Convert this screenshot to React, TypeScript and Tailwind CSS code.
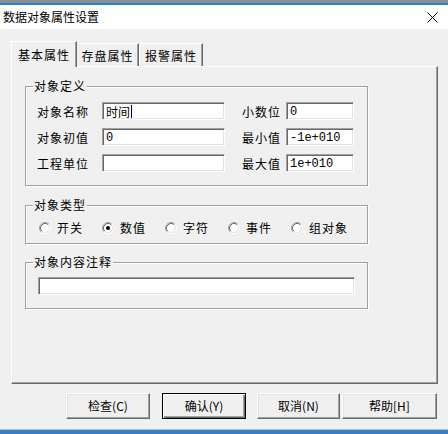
import React from 'react';

const sunken =
  'border border-t-[#a0a0a0] border-l-[#a0a0a0] border-b-white border-r-white shadow-[inset_1px_1px_0_#696969,inset_-1px_-1px_0_#e3e3e3] bg-white';

const Field = ({ value, width, caret = false, mono = false }: { value?: string; width: string; caret?: boolean; mono?: boolean }) => (
  <div className={`${sunken} ${width} h-[18px] flex items-center pl-[3px] pt-[1px]`}>
    <span
      className={
        mono
          ? "font-['Liberation_Mono',monospace] text-[12px] leading-[14px] text-black"
          : 'text-[12px] leading-[14px] text-black'
      }
    >
      {value}
    </span>
    {caret && <span className="w-[1px] h-[13px] bg-black ml-[1px]" />}
  </div>
);

const Group = ({ label, className, children }: { label: string; className: string; children?: React.ReactNode }) => (
  <div
    className={`relative w-[343px] border border-[#a0a0a0] shadow-[inset_1px_1px_0_#fff,1px_1px_0_#fff] ${className}`}
  >
    <span className="absolute left-[7px] top-[-9px] px-[1px] bg-[#f0f0f0] text-[12px] tracking-[1px] leading-[16px] text-black">
      {label}
    </span>
    {children}
  </div>
);

const Radio = ({ checked = false }: { checked?: boolean }) => (
  <svg width="12" height="12" viewBox="0 0 12 12" className="shrink-0">
    <circle cx="6" cy="6" r="4.5" fill="#fff" />
    <path d="M2.11 9.89 A5.5 5.5 0 0 1 9.89 2.11" fill="none" stroke="#a0a0a0" />
    <path d="M9.89 2.11 A5.5 5.5 0 0 1 2.11 9.89" fill="none" stroke="#fff" />
    <path d="M2.82 9.18 A4.5 4.5 0 0 1 9.18 2.82" fill="none" stroke="#696969" />
    <path d="M9.18 2.82 A4.5 4.5 0 0 1 2.82 9.18" fill="none" stroke="#e3e3e3" />
    {checked && <circle cx="6" cy="6" r="2" fill="#000" />}
  </svg>
);

const Button = ({ label, width, primary = false, className = '' }: { label: string; width: string; primary?: boolean; className?: string }) => (
  <div
    className={`${width} h-[26px] flex items-center justify-center text-[12px] leading-[14px] text-black bg-[#f0f0f0] ${
      primary
        ? 'border border-black shadow-[inset_1px_1px_0_#fff,inset_-1px_-1px_0_#696969,inset_-2px_-2px_0_#a0a0a0]'
        : 'border border-t-white border-l-white border-b-[#696969] border-r-[#696969] shadow-[inset_-1px_-1px_0_#a0a0a0,inset_1px_1px_0_#e3e3e3]'
    } ${className}`}
  >
    {label}
  </div>
);

export default function App() {
  const types = ['开关', '数值', '字符', '事件', '组对象'];

  return (
    <div className="w-[448px] h-[434px] bg-[#f0f0f0] flex flex-col overflow-hidden font-['Noto_Sans_CJK_SC','Liberation_Sans',sans-serif] text-black">
      <div className="h-[3px] bg-[#8e8e8e]" />
      <div className="h-[2px] bg-[#1c86d8]" />
      <div className="h-[24px] bg-white flex items-center justify-between pl-[3px] pr-[10px]">
        <span className="text-[12px] leading-[14px]">数据对象属性设置</span>
        <svg width="11" height="11" viewBox="0 0 11 11">
          <path d="M0.5 0.5 L10.5 10.5 M10.5 0.5 L0.5 10.5" stroke="#000" strokeWidth="1" />
        </svg>
      </div>

      {/* tabs */}
      <div className="flex items-end h-[25px] mt-[12px] pl-[11px]">
        <div className="relative z-10 -mb-[1px] h-[26px] w-[66px] flex items-center justify-center bg-[#f0f0f0] border-t border-l border-t-white border-l-white border-r border-r-[#696969] shadow-[inset_-1px_0_0_#a0a0a0] text-[12px] tracking-[1px] leading-[15px]">
          基本属性
        </div>
        <div className="h-[23px] w-[62px] flex items-center justify-center border-t border-t-white border-r border-r-[#696969] shadow-[inset_-1px_0_0_#a0a0a0] text-[12px] tracking-[1px] leading-[15px]">
          存盘属性
        </div>
        <div className="h-[23px] w-[64px] flex items-center justify-center border-t border-l border-t-white border-l-white border-r border-r-[#696969] shadow-[inset_-1px_0_0_#a0a0a0] text-[12px] tracking-[1px] leading-[15px]">
          报警属性
        </div>
      </div>

      {/* tab page */}
      <div className="ml-[11px] w-[427px] h-[318px] border border-t-white border-l-white border-r-[#696969] border-b-[#696969] shadow-[inset_-1px_-1px_0_#a0a0a0] pl-[13px] pt-[19px] flex flex-col">
        <Group label="对象定义" className="h-[100px] pt-[15px] pl-[11px]">
          <div className="flex flex-col gap-[8px]">
            {[
              ['对象名称', '时间', '小数位', '0'],
              ['对象初值', '0', '最小值', '-1e+010'],
              ['工程单位', '', '最大值', '1e+010'],
            ].map(([l1, v1, l2, v2], i) => (
              <div key={l1} className="flex items-center h-[18px]">
                <span className="w-[65px] text-[12px] tracking-[1px] leading-[15px]">{l1}</span>
                <Field value={v1} width="w-[123px]" caret={i === 0} mono={i !== 0} />
                <span className="w-[44px] ml-[17px] text-[12px] tracking-[1px] leading-[15px]">{l2}</span>
                <Field value={v2} width="w-[68px]" mono />
              </div>
            ))}
          </div>
        </Group>

        <Group label="对象类型" className="h-[39px] mt-[19px] pl-[13px] flex items-center pt-[6px]">
          {types.map((t, i) => (
            <div key={t} className="w-[63px] flex items-center gap-[6px]">
              <Radio checked={i === 1} />
              <span className="text-[12px] tracking-[1px] leading-[15px]">{t}</span>
            </div>
          ))}
        </Group>

        <Group label="对象内容注释" className="h-[47px] mt-[18px] pl-[12px] pt-[14px]">
          <Field width="w-[317px]" />
        </Group>
      </div>

      {/* buttons */}
      <div className="flex mt-[9px] pl-[66px]">
        <Button label="检查(C)" width="w-[84px]" />
        <Button label="确认(Y)" width="w-[84px]" primary className="ml-[12px]" />
        <Button label="取消(N)" width="w-[83px]" className="ml-[11px]" />
        <Button label="帮助[H]" width="w-[95px]" className="ml-[2px]" />
      </div>

      <div className="mt-[10px] h-[1px] bg-[#9fc3e6]" />
      <div className="h-[4px] bg-[#3b7ec2]" />
    </div>
  );
}
